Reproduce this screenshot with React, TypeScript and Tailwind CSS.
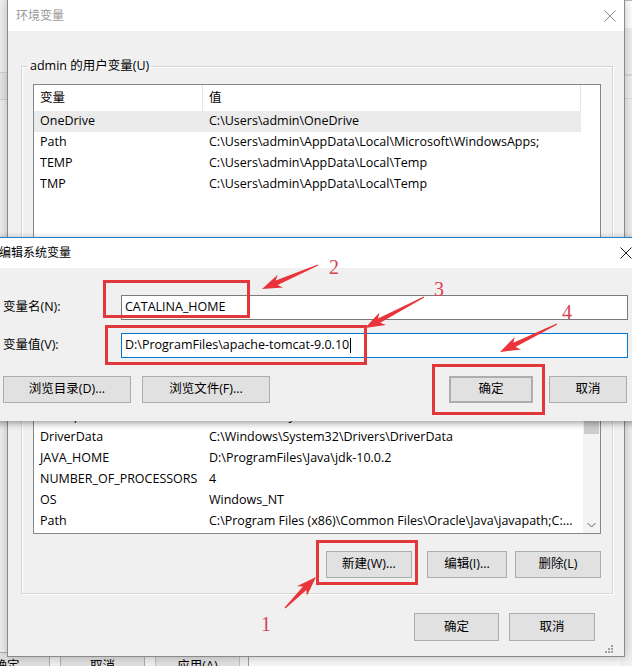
import clsx from "clsx";

type Row = { name: string; value: string };

const userVars: Row[] = [
  { name: "OneDrive", value: "C:\\Users\\admin\\OneDrive" },
  { name: "Path", value: "C:\\Users\\admin\\AppData\\Local\\Microsoft\\WindowsApps;" },
  { name: "TEMP", value: "C:\\Users\\admin\\AppData\\Local\\Temp" },
  { name: "TMP", value: "C:\\Users\\admin\\AppData\\Local\\Temp" },
];

const systemVars: Row[] = [
  { name: "ComSpec", value: "C:\\Windows\\system32\\cmd.exe" },
  { name: "DriverData", value: "C:\\Windows\\System32\\Drivers\\DriverData" },
  { name: "JAVA_HOME", value: "D:\\ProgramFiles\\Java\\jdk-10.0.2" },
  { name: "NUMBER_OF_PROCESSORS", value: "4" },
  { name: "OS", value: "Windows_NT" },
  { name: "Path", value: "C:\\Program Files (x86)\\Common Files\\Oracle\\Java\\javapath;C:..." },
];

function CloseX({ color = "#333" }: { color?: string }) {
  return (
    <svg width="12" height="12" viewBox="0 0 12 12">
      <path d="M0.5 0.5L11.5 11.5M11.5 0.5L0.5 11.5" stroke={color} strokeWidth="1" />
    </svg>
  );
}

function Btn({ children, className }: { children: React.ReactNode; className?: string }) {
  return (
    <button
      type="button"
      className={clsx(
        "flex items-center justify-center border border-[#adadad] bg-[#e1e1e1] text-[12.5px] leading-none text-black",
        className
      )}
    >
      {children}
    </button>
  );
}

function Scrollbar() {
  return (
    <div className="flex w-[17px] flex-col bg-[#f4f4f4]">
      <div className="flex h-[17px] items-center justify-center">
        <svg width="9" height="6" viewBox="0 0 9 6">
          <path d="M0.5 5L4.5 1L8.5 5" stroke="#606060" fill="none" />
        </svg>
      </div>
      <div className="mx-px h-[37px] bg-[#cdcdcd]" />
      <div className="flex-1" />
      <div className="flex h-[17px] items-center justify-center">
        <svg width="9" height="6" viewBox="0 0 9 6">
          <path d="M0.5 1L4.5 5L8.5 1" stroke="#606060" fill="none" />
        </svg>
      </div>
    </div>
  );
}

function VarList({
  rows,
  selected,
  scroll,
  className,
}: {
  rows: Row[];
  selected?: string;
  scroll?: boolean;
  className?: string;
}) {
  return (
    <div className={clsx("flex overflow-hidden border border-[#828790] bg-white", className)}>
      <div className="flex w-[547px] flex-col">
        <div className="flex h-[26px] shrink-0">
          <div className="flex w-[169px] items-center border-r border-[#e5e5e5] pl-[6px]">变量</div>
          <div className="flex flex-1 items-center border-r border-[#e5e5e5] pl-[6px]">值</div>
        </div>
        {rows.map((r) => (
          <div
            key={r.name}
            className={clsx("flex h-[21px] shrink-0 items-center", r.name === selected && "bg-[#ebebeb]")}
          >
            <div className="w-[169px] overflow-hidden whitespace-nowrap pl-[6px]">{r.name}</div>
            <div className="flex-1 overflow-hidden whitespace-nowrap pl-[6px]">{r.value}</div>
          </div>
        ))}
      </div>
      {scroll && <div className="ml-auto flex"><Scrollbar /></div>}
    </div>
  );
}

function arrowPoints(x1: number, y1: number, x2: number, y2: number) {
  const dx = x2 - x1;
  const dy = y2 - y1;
  const len = Math.hypot(dx, dy);
  const ux = dx / len;
  const uy = dy / len;
  const nx = -uy;
  const ny = ux;
  const head = 16;
  const p = (d: number, w: number) => `${x1 + ux * d + nx * w},${y1 + uy * d + ny * w}`;
  return [
    p(0, 0.6),
    p(len - head, 2.4),
    p(len - head - 4, 7),
    p(len, 0),
    p(len - head - 4, -7),
    p(len - head, -2.4),
    p(0, -0.6),
  ].join(" ");
}

const arrows = [
  { from: [318, 265], to: [262, 289] },
  { from: [424, 297], to: [365, 328] },
  { from: [557, 324], to: [500, 352] },
  { from: [285, 608], to: [316, 577] },
];

const boxes = [
  { x: 104.5, y: 281.5, w: 144, h: 35 },
  { x: 106.5, y: 326.5, w: 259, h: 37 },
  { x: 433.5, y: 365.5, w: 110, h: 48 },
  { x: 317.5, y: 541.5, w: 99, h: 42 },
];

const marks = [
  { n: "1", x: 266, y: 624 },
  { n: "2", x: 334, y: 267 },
  { n: "3", x: 439, y: 289 },
  { n: "4", x: 567, y: 312 },
];

export default function App() {
  return (
    <div className="relative h-[666px] w-[632px] overflow-hidden bg-[#f7f7f7] font-['Open_Sans','Noto_Sans_CJK_SC',sans-serif] text-[12.5px] text-black">
      {/* window behind, left side */}
      <div className="absolute left-[-400px] top-[-10px] flex h-[700px] w-[649px] flex-col border-r border-[#9a9a9a] bg-[#f0f0f0]">
        <div className="mt-[8px] pr-[2px] text-right text-[#888]">Windows 设置 · func</div>
        <div className="mt-[8px] text-right text-[14px]">高级系统设</div>
        <div className="mt-[6px] flex justify-end pr-[2px]">
          <div className="h-[12px] w-[12px] rounded-sm bg-[#3a8ad6]" />
        </div>
        <div className="mt-[8px] h-[28px] border-y border-[#d0d0d0] bg-[#e6e6e6]" />
        <div className="mt-[40px] text-right text-[14px]">环境变量选</div>
        <div className="mt-[20px] text-right text-[14px]">启动和故障恢复问题</div>
        <div className="mt-auto mb-[10px] flex justify-end gap-[10px] pr-[8px]">
          <Btn className="h-[28px] w-[86px]">确定</Btn>
          <Btn className="h-[28px] w-[85px]">取消</Btn>
          <Btn className="h-[28px] w-[85px] border-[#bfbfbf] bg-[#cccccc] text-[#8c8c8c]">应用(A)</Btn>
        </div>
      </div>

      {/* window behind, right side */}
      <div className="absolute left-[620px] top-0 flex h-[700px] w-[60px] flex-col bg-[#f0f0f0]">
        <div className="h-[28px] border-t border-[#bbb] bg-white" />
        <div className="mt-[46px] h-[2px] border-y border-[#dadada]" />
        <div className="mt-[22px] h-px bg-[#dadada]" />
      </div>

      {/* 环境变量 */}
      <div className="absolute left-[7px] top-0 flex h-[657px] w-[618px] flex-col border-x border-b border-[#8a8a8a] bg-[#f0f0f0] shadow-[0_0_10px_rgba(0,0,0,0.25)]">
        <div className="flex h-[31px] shrink-0 items-center justify-between bg-white pl-[8px] pr-[8px]">
          <span className="text-[12px] text-[#999]">环境变量</span>
          <CloseX color="#8a8a8a" />
        </div>

        <div className="flex flex-1 flex-col pl-[13px] pr-[11px] pt-[26px]">
          <fieldset className="border border-[#d5d5d5] px-[11px] pb-[15px] shadow-[inset_1px_1px_0_#fff,1px_1px_0_#fff]">
            <legend className="ml-[-5px] px-[2px] leading-[18px]">admin 的用户变量(U)</legend>
            <VarList rows={userVars} selected="OneDrive" className="mt-[9px] h-[184px]" />
            <div className="mt-[18px] flex h-[27px] justify-end gap-[10px]">
              <Btn className="w-[86px]">新建(N)...</Btn>
              <Btn className="w-[80px]">编辑(E)...</Btn>
              <Btn className="w-[86px]">删除(D)</Btn>
            </div>
          </fieldset>

          <fieldset className="mt-[23px] border border-[#d5d5d5] px-[11px] pb-[15px] shadow-[inset_1px_1px_0_#fff,1px_1px_0_#fff]">
            <legend className="ml-[-5px] px-[2px] leading-[18px]">系统变量(S)</legend>
            <VarList rows={systemVars} scroll className="mt-[9px] h-[155px]" />
            <div className="mt-[17px] flex h-[27px]">
              <Btn className="ml-auto w-[86px]">新建(W)...</Btn>
              <Btn className="ml-[15px] w-[80px]">编辑(I)...</Btn>
              <Btn className="ml-[8px] w-[86px]">删除(L)</Btn>
            </div>
          </fieldset>

          <div className="mt-[19px] flex h-[28px] justify-end gap-[10px] pr-[18px]">
            <Btn className="w-[85px]">确定</Btn>
            <Btn className="w-[86px]">取消</Btn>
          </div>

          <div className="mt-auto flex justify-end pb-[3px]">
            <svg width="10" height="10" viewBox="0 0 10 10" fill="#a0a0a0">
              <rect x="8" y="2" width="2" height="2" />
              <rect x="5" y="5" width="2" height="2" />
              <rect x="8" y="5" width="2" height="2" />
              <rect x="2" y="8" width="2" height="2" />
              <rect x="5" y="8" width="2" height="2" />
              <rect x="8" y="8" width="2" height="2" />
            </svg>
          </div>
        </div>
      </div>

      {/* 编辑系统变量 */}
      <div className="absolute left-[-9px] top-[237px] flex h-[184px] w-[650px] flex-col border-t border-[#1c7fd0] bg-[#f0f0f0] shadow-[0_2px_7px_rgba(0,0,0,0.4)]">
        <div className="flex h-[30px] shrink-0 items-center justify-between bg-white pl-[8px] pr-[9px]">
          <span className="text-[12px]">编辑系统变量</span>
          <CloseX color="#222" />
        </div>
        <div className="flex flex-col pl-[12px] pr-[13px] pt-[27px]">
          <div className="flex h-[25px] items-center">
            <span className="w-[118px]">变量名(N):</span>
            <div className="flex h-full flex-1 items-center border border-[#7a7a7a] bg-white pl-[3px]">CATALINA_HOME</div>
          </div>
          <div className="mt-[13px] flex h-[25px] items-center">
            <span className="w-[118px]">变量值(V):</span>
            <div className="flex h-full flex-1 items-center border border-[#0078d7] bg-white pl-[3px]">
              D:\ProgramFiles\apache-tomcat-9.0.10
              <span className="ml-px h-[15px] w-px bg-black" />
            </div>
          </div>
          <div className="mt-[18px] flex h-[27px]">
            <Btn className="w-[128px]">浏览目录(D)...</Btn>
            <Btn className="ml-[11px] w-[128px]">浏览文件(F)...</Btn>
            <Btn className="ml-auto w-[84px] border-2 border-[#0078d7]">确定</Btn>
            <Btn className="ml-[16px] mr-px w-[78px]">取消</Btn>
          </div>
        </div>
      </div>

      {/* annotations */}
      <svg className="pointer-events-none absolute left-0 top-0" width="632" height="666">
        {boxes.map((b, i) => (
          <rect key={i} x={b.x} y={b.y} width={b.w} height={b.h} fill="none" stroke="#e2383c" strokeWidth="3" />
        ))}
        {arrows.map((a, i) => (
          <polygon key={i} points={arrowPoints(a.from[0], a.from[1], a.to[0], a.to[1])} fill="#e8343a" />
        ))}
        {marks.map((m) => (
          <text
            key={m.n}
            x={m.x}
            y={m.y + 7}
            textAnchor="middle"
            fontSize="20"
            fontFamily="'Liberation Serif', serif"
            fill="#d9434f"
          >
            {m.n}
          </text>
        ))}
      </svg>
    </div>
  );
}
